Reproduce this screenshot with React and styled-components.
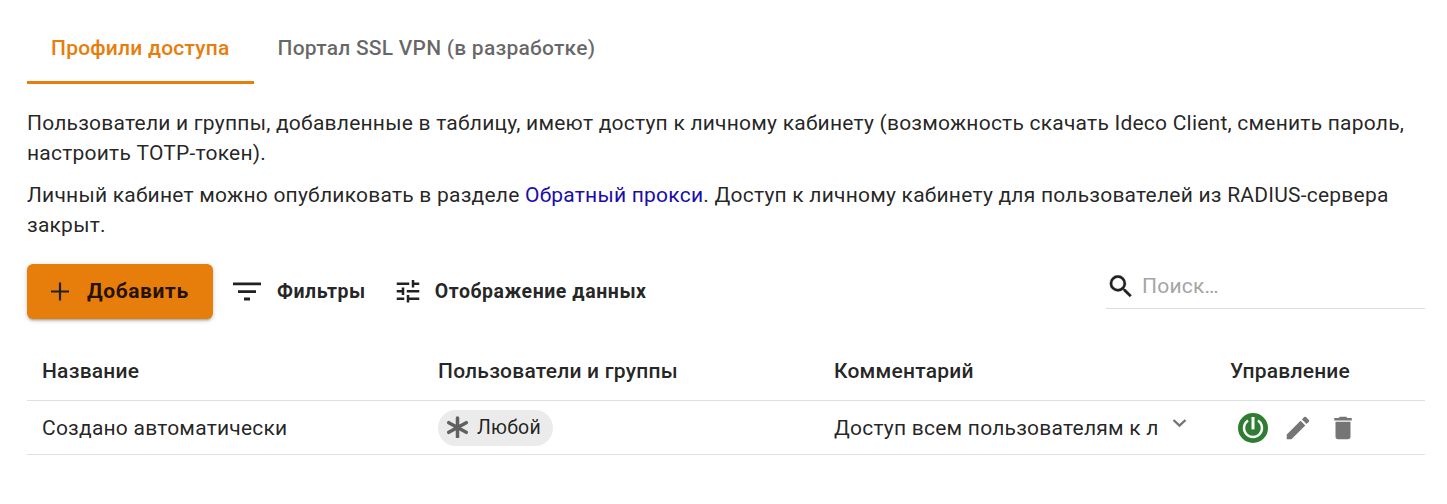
import React from "react";
import styled, { createGlobalStyle } from "styled-components";

const Global = createGlobalStyle`
  * { box-sizing: border-box; }
  body { margin: 0; background: #fff; color: rgba(0,0,0,.87); font-family: Roboto, sans-serif; font-size: 21px; letter-spacing: .01071em; }
`;
const Page = styled.main`width: 1447px; height: 504px; padding: 12px 22px 0 27px; overflow: hidden;`;
const Tabs = styled.nav`display: flex; height: 72px;`;
const Tab = styled.button`
  font: 500 21px/30px Roboto, sans-serif; letter-spacing: .01071em;
  height: 72px; padding: 2px 24px 0; border: 0; background: none; white-space: nowrap;
  border-bottom: 3px solid ${p => p.$active ? "#e77d0a" : "transparent"};
  color: ${p => p.$active ? "#e77d0a" : "rgba(0,0,0,.6)"};
`;
const Intro = styled.section`padding-top: 24px;`;
const Text = styled.p`margin: 0 0 12px; line-height: 30px;`;
const Line = styled.span`display: block; white-space: nowrap;`;
const Link = styled.a`color: #1a0dab; text-decoration: none;`;
const Toolbar = styled.div`display: flex; height: 56px; margin-top: 24px;`;
const AddButton = styled.button`
  display: flex; align-items: center; width: 186px; height: 55px; padding: 0 0 1px 19px; gap: 14px; border: 0; border-radius: 6px;
  background: #e77d0a; color: rgba(0,0,0,.87); font: 700 21px Roboto, sans-serif; letter-spacing: .6px;
  box-shadow: 0 3px 2px -2px rgba(0,0,0,.2), 0 2px 3px rgba(0,0,0,.14), 0 1px 6px rgba(0,0,0,.12);
`;
const ToolButton = styled.button`
  display: flex; align-items: center; padding: 0; border: 0; background: none; margin-left: ${p => p.$ml}px; gap: ${p => p.$gap}px; height: 55px;
  color: rgba(0,0,0,.87); font: 700 19.5px Roboto, sans-serif; letter-spacing: .02857em; white-space: nowrap;
`;
const Search = styled.label`display: flex; align-items: center; gap: 6px; width: 319px; height: 45px; margin-left: auto; border-bottom: 1px solid #ddd; color: #a5a5a5;`;
const Icon = styled.svg`display: block; flex: none; width: ${p => p.$w}px; height: ${p => p.$h || p.$w}px; fill: ${p => p.$color || "#212121"};`;
const Table = styled.section`margin-top: 20px;`;
const Row = styled.div`display: grid; grid-template-columns: 396px 396px 396px 1fr; height: ${p => p.$head ? 61 : 54}px; padding: ${p => p.$head ? "1px" : 0} 0 0 15px; border-bottom: 1px solid #e0e0e0; align-items: center; font-weight: ${p => p.$head ? 500 : 400};`;
const Cell = styled.div`display: flex; align-items: center; white-space: nowrap;`;
const Comment = styled.span`width: 335px;`;
const Chevron = styled(Icon)`margin-bottom: 10px;`;
const Chip = styled.span`display: flex; align-items: center; gap: 9px; width: 115px; height: 36px; border-radius: 18px; padding: 0 0 1px 8px; background: #ebebeb; font-size: 19.5px; letter-spacing: .2px;`;
const Actions = styled.div`display: flex; align-items: center; gap: 15px; padding-left: 8px;`;

export default function App() {
  return <><Global /><Page>
    <Tabs><Tab $active>Профили доступа</Tab><Tab>Портал SSL VPN (в разработке)</Tab></Tabs>
    <Intro>
      <Text><Line>Пользователи и группы, добавленные в таблицу, имеют доступ к личному кабинету (возможность скачать Ideco Client, сменить пароль,</Line><Line>настроить TOTP-токен).</Line></Text>
      <Text><Line>Личный кабинет можно опубликовать в разделе <Link>Обратный прокси</Link>. Доступ к личному кабинету для пользователей из RADIUS-сервера</Line><Line>закрыт.</Line></Text>
    </Intro>
    <Toolbar>
      <AddButton><Icon $w={27} viewBox="0 0 27 27"><path d="M5 12.4h7.9V4.5h2.2v7.9H23v2.2h-7.9v7.9h-2.2v-7.9H5z" /></Icon>Добавить</AddButton>
      <ToolButton $ml={19} $gap={15}><Icon $w={30} viewBox="0 0 30 30"><path d="M1 5.5h28v2.8H1zM6 13.2h18V16H6zM12 20.5h6v3h-6z" /></Icon>Фильтры</ToolButton>
      <ToolButton $ml={27} $gap={12}><Icon $w={30} viewBox="0 .6 24 24"><path d="M3 17v2h6v-2H3zM3 5v2h10V5H3zm10 16v-2h8v-2h-8v-2h-2v6h2zM7 9v2H3v2h4v2h2V9H7zm14 4v-2H11v2h10zm-6-4h2V7h4V5h-4V3h-2v6z" /></Icon>Отображение данных</ToolButton>
      <Search><Icon $w={30} viewBox="0 -.4 24 24"><path stroke="#212121" strokeWidth=".2" d="M15.5 14h-.79l-.28-.27A6.47 6.47 0 0 0 16 9.5 6.5 6.5 0 1 0 9.5 16c1.61 0 3.09-.59 4.23-1.57l.27.28v.79l5 4.99L20.49 19l-4.99-5zm-6 0a4.5 4.5 0 1 1 0-9 4.5 4.5 0 0 1 0 9z" /></Icon>Поиск…</Search>
    </Toolbar>
    <Table>
      <Row $head><Cell>Название</Cell><Cell>Пользователи и группы</Cell><Cell>Комментарий</Cell><Cell>Управление</Cell></Row>
      <Row><Cell>Создано автоматически</Cell><Cell><Chip><Icon $w={22} viewBox="0 0 22 22"><path d="M11.5 2v19M2.8 6.7l17.4 9.6M2.8 16.3l17.4-9.6" stroke="#616161" strokeWidth="3.5" strokeLinecap="round" /></Icon>Любой</Chip></Cell>
        <Cell><Comment>Доступ всем пользователям к л</Comment><Chevron $w={20} viewBox="0 0 20 20"><path d="m4.5 7 6 5.7 6-5.7" fill="none" stroke="#757575" strokeWidth="2.4" /></Chevron></Cell>
        <Actions><Icon $w={30} viewBox="0 0 30 30"><circle cx="15" cy="15" r="15" fill="#2e7d32" /><path d="M15 4v12.4" stroke="#fff" strokeWidth="3" /><path d="M10 7.5a9 9 0 1 0 10 0" fill="none" stroke="#fff" strokeWidth="2.4" /></Icon>
          <Icon $w={30} $color="#757575" viewBox="0 0 24 24"><path d="M3 17.25V21h3.75L17.81 9.94l-3.75-3.75zM20.71 7.04a1 1 0 0 0 0-1.41l-2.34-2.34a1 1 0 0 0-1.41 0l-1.83 1.83 3.75 3.75z" /></Icon>
          <Icon $w={30} $color="#757575" viewBox="0 0 24 24"><path d="M6 19c0 1.1.9 2 2 2h8c1.1 0 2-.9 2-2V7H6zM19 4h-3.5l-1-1h-5l-1 1H5v2h14z" /></Icon></Actions></Row>
    </Table>
  </Page></>;
}
